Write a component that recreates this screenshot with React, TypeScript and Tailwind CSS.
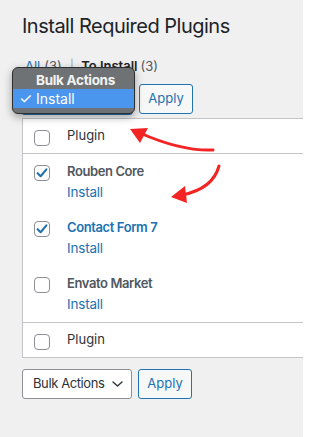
import React from "react";

function Check({ checked = false }: { checked?: boolean }) {
  return (
    <span className="w-[16px] h-[16px] rounded-[4px] border border-[#8c8f94] bg-white flex items-center justify-center shrink-0">
      {checked && (
        <svg width="14" height="14" viewBox="0 0 14 14">
          <path d="M2.6 7.2 L5.6 10.2 L11.4 3.4" fill="none" stroke="#2271b1" strokeWidth="2.1" strokeLinecap="round" strokeLinejoin="round" />
        </svg>
      )}
    </span>
  );
}

function Row({ name, link = false, checked = false }: { name: string; link?: boolean; checked?: boolean }) {
  return (
    <div className="flex h-[56px]">
      <div className="w-[44px] pl-[11px] pt-[11px] shrink-0">
        <Check checked={checked} />
      </div>
      <div className="pt-[7px] text-[13px] whitespace-nowrap">
        <div className={"leading-[20px] font-semibold tracking-[-0.4px] " + (link ? "text-[#2271b1]" : "text-[#50575e]")}>{name}</div>
        <div className="leading-[20px] mt-[1px] text-[13.5px] tracking-[-0.2px] text-[#2271b1]">Install</div>
      </div>
    </div>
  );
}

function SelectBox({ focused = false }: { focused?: boolean }) {
  return (
    <div
      className={
        "w-[110px] h-[30px] rounded-[3px] bg-white border flex items-center justify-between pl-[10px] pr-[8px] text-[13px] tracking-[-0.4px] text-[#2c3338] whitespace-nowrap " +
        (focused ? "border-[#2271b1] shadow-[0_0_0_1px_#2271b1]" : "border-[#8c8f94]")
      }
    >
      <span>Bulk Actions</span>
      <svg width="11" height="6" viewBox="0 0 11 6" className="shrink-0">
        <path d="M1 1 L5.5 5 L10 1" fill="none" stroke="#2c3338" strokeWidth="1.4" strokeLinecap="round" strokeLinejoin="round" />
      </svg>
    </div>
  );
}

function ApplyBtn() {
  return (
    <div className="w-[54px] h-[30px] rounded-[3px] border border-[#2271b1] bg-[#f6f7f7] text-[#2271b1] text-[13px] flex items-center justify-center">
      Apply
    </div>
  );
}

function HeadRow({ top = false }: { top?: boolean }) {
  return (
    <div className={"flex items-center h-[35px] border-[#c3c4c7] " + (top ? "border-b" : "border-t")}>
      <div className="w-[44px] pl-[11px] pt-[3px] shrink-0">
        <Check />
      </div>
      <span className="text-[13px] text-[#2c3338]">Plugin</span>
    </div>
  );
}

export default function App() {
  return (
    <div className="relative w-[303px] h-[437px] overflow-hidden bg-[#f0f0f1] font-['Inter','Liberation_Sans',sans-serif]">
      <div className="pl-[22px] pt-[12px]">
        <h1 className="text-[20px] leading-[29px] tracking-[-0.5px] text-[#1d2327] font-normal whitespace-nowrap">Install Required Plugins</h1>
        <div className="mt-[15px] h-[20px] leading-[20px] text-[13px] pl-[3px] text-[#50575e] whitespace-nowrap flex">
          <span className="text-[#2271b1]">All</span>
          <span className="ml-[4px]">(3)</span>
          <span className="text-[#a7aaad] ml-[8px] mr-[7px]">|</span>
          <span className="font-semibold text-[#1d2327]">To Install</span>
          <span className="ml-[3px]">(3)</span>
        </div>
        <div className="mt-[8px] flex gap-[7px]">
          <SelectBox focused />
          <ApplyBtn />
        </div>
        <div className="mt-[4px] w-[300px] bg-white border border-[#c3c4c7]">
          <HeadRow top />
          <Row name="Rouben Core" checked />
          <Row name="Contact Form 7" link checked />
          <Row name="Envato Market" />
          <HeadRow />
        </div>
        <div className="mt-[11px] flex gap-[6px]">
          <SelectBox />
          <ApplyBtn />
        </div>
      </div>

      {/* native dropdown popup */}
      <div className="absolute left-[12px] top-[67px] w-[123px] h-[47px] rounded-[6px] border border-[#2e2f30] bg-[#6f7274] shadow-[0_3px_8px_rgba(0,0,0,0.35)] overflow-hidden pt-[3px] text-[14px] text-white whitespace-nowrap">
        <div className="h-[18px] leading-[18px] pl-[23px] text-[13.5px] tracking-[-0.3px] font-bold text-[#f2f2f2]">Bulk Actions</div>
        <div className="h-[19px] leading-[19px] bg-[#4a96ee] flex items-center">
          <span className="w-[23px] pl-[6px] text-[15px]">✓</span>
          <span>Install</span>
        </div>
      </div>

      {/* red annotation arrows */}
      <svg className="absolute left-0 top-0 pointer-events-none" width="303" height="437" viewBox="0 0 303 437">
        <path d="M213 150 C190 151 165 144 140 133" fill="none" stroke="#f22424" strokeWidth="3" strokeLinecap="round" />
        <polygon points="130,129 148,128 140,143" fill="#f22424" />
        <path d="M219 166 C215 181 202 191 182 195" fill="none" stroke="#f22424" strokeWidth="3" strokeLinecap="round" />
        <polygon points="171,197 185,186 187,203" fill="#f22424" />
      </svg>
    </div>
  );
}
